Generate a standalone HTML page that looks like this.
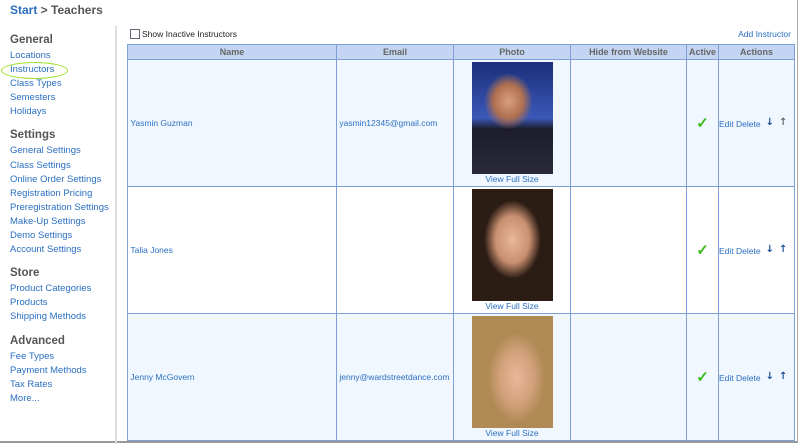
<!DOCTYPE html>
<html><head><style>
body{margin:0;width:799px;height:444px;overflow:hidden;background:#fff;font-family:"Liberation Sans",Tahoma,sans-serif;font-size:9px;color:#2a6fc0;position:relative}
.frame{position:absolute;left:0;top:0;width:797px;height:441px;border-right:1px solid #aaa;border-bottom:2px solid #999}
.crumb{position:absolute;left:10px;top:3px;font-size:12px;font-weight:bold;color:#555}
.crumb b{color:#2a6fc0}
.sep{position:absolute;left:115px;top:26px;width:2px;height:418px;background:#ddd}
.nav{position:absolute;left:10px;top:33px;line-height:14.1px}
.nav h3{margin:0 0 1px;font-size:11.5px;color:#555;font-weight:bold;line-height:15px}
.nav div{font-size:9.5px}
.gap{height:9px}
.oval{position:absolute;left:1px;top:62px;width:65px;height:15px;border:1.5px solid #9de02a;border-radius:50%}
.cb{position:absolute;left:130px;top:29px;color:#222;font-size:8.5px}
.cb span{display:inline-block;width:8px;height:8px;border:1px solid #667;vertical-align:-2px;margin-right:2px}
.add{position:absolute;right:8px;top:29px;font-size:8.5px}
table{position:absolute;left:127px;top:44px;border-collapse:collapse;width:668px}
td,th{border:1px solid #7f9fd6;padding:0}
th{background:#c3d5f2;color:#666;height:14px;font-size:9px}
td{height:126px;vertical-align:middle;font-size:8.5px}
tr.a td{background:#f1f7ff}
.ph{text-align:center;vertical-align:top}
.ph div.i{width:81px;height:112px;margin:2px auto 0}
.chk{color:#3cba1a;font-size:15px;text-align:center;font-weight:bold}
.ar{color:#1d4f9a;font-weight:bold;font-size:10px;margin-left:5px;vertical-align:2px;font-family:"DejaVu Sans",sans-serif}
</style></head><body>
<div class="frame"></div>
<div class="crumb"><b>Start</b> &gt; Teachers</div>
<div class="sep"></div>
<div class="nav">
<h3>General</h3><div>Locations</div><div>Instructors</div><div>Class Types</div><div>Semesters</div><div>Holidays</div><div class="gap"></div>
<h3>Settings</h3><div>General Settings</div><div>Class Settings</div><div>Online Order Settings</div><div>Registration Pricing</div><div>Preregistration Settings</div><div>Make-Up Settings</div><div>Demo Settings</div><div>Account Settings</div><div class="gap"></div>
<h3>Store</h3><div>Product Categories</div><div>Products</div><div>Shipping Methods</div><div class="gap"></div>
<h3>Advanced</h3><div>Fee Types</div><div>Payment Methods</div><div>Tax Rates</div><div>More...</div>
</div>
<div class="oval"></div>
<div class="cb"><span></span>Show Inactive Instructors</div>
<div class="add">Add Instructor</div>
<table>
<tr><th style="width:208px">Name</th><th style="width:116px">Email</th><th style="width:116px">Photo</th><th style="width:115px">Hide from Website</th><th style="width:31px">Active</th><th>Actions</th></tr>
<tr class="a"><td>&nbsp;Yasmin Guzman</td><td>&nbsp;yasmin12345@gmail.com</td><td class="ph"><div class="i" style="background:radial-gradient(ellipse 30% 25% at 45% 35%,#d7a07f,#b07050 60%,transparent 100%),linear-gradient(#1b2f7a,#3a58b8 50%,#1c1c2a 60%,#2a2a3a)"></div>View Full Size</td><td></td><td class="chk">✓</td><td>Edit Delete<span class="ar">↓</span><span class="ar" style="color:#666">↑</span></td></tr>
<tr><td>&nbsp;Talia Jones</td><td></td><td class="ph"><div class="i" style="background:radial-gradient(ellipse 35% 35% at 50% 45%,#e9b89a,#c98f70 60%,#2b1c14 100%)"></div>View Full Size</td><td></td><td class="chk">✓</td><td>Edit Delete<span class="ar">↓</span><span class="ar">↑</span></td></tr>
<tr class="a"><td>&nbsp;Jenny McGovern</td><td>&nbsp;jenny@wardstreetdance.com</td><td class="ph"><div class="i" style="background:radial-gradient(ellipse 35% 40% at 55% 55%,#eab89a,#d2a07a 60%,#b08a55 100%)"></div>View Full Size</td><td></td><td class="chk">✓</td><td>Edit Delete<span class="ar">↓</span><span class="ar">↑</span></td></tr>
</table>
</body></html>
